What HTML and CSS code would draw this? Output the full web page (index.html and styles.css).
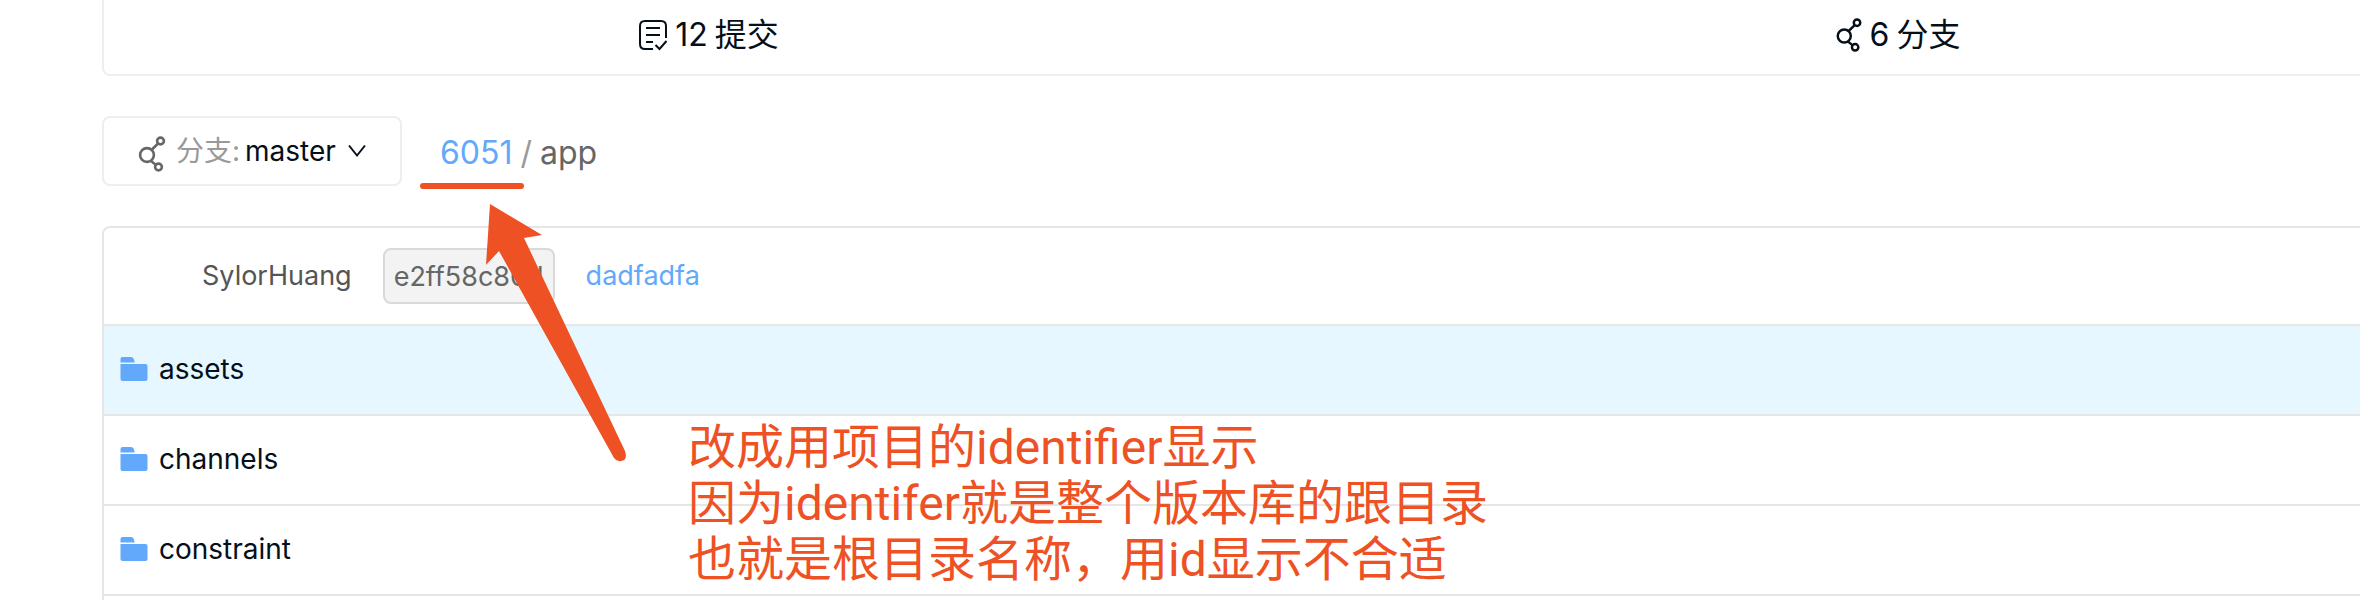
FILE: index.html
```
<!DOCTYPE html>
<html lang="zh-CN">
<head>
    <meta charset="UTF-8">
    <title>app</title>
    <link rel="stylesheet" href="styles.css">
</head>
<body>
    <svg class="symbols">
        <symbol id="icon-branch" viewBox="0 0 28 36">
            <g fill="none" stroke="currentColor" stroke-width="2.6">
                <circle cx="9" cy="19" r="6.9"/>
                <circle cx="22.500" cy="5" r="3.400"/>
                <circle cx="20.500" cy="31" r="3.400"/>
                <path d="M13.500 14L20 7.500M13 25l5 4"/>
            </g>
        </symbol>
        <symbol id="icon-folder" viewBox="0 0 28 26">
            <path fill="currentColor" d="M.5 6.500V3Q.5 1 2.500 1H11q2 0 2.800 2l1 3.500z"/>
            <path fill="currentColor" d="M.5 8h25q2 0 2 2v13q0 2-2 2h-23q-2 0-2-2z"/>
        </symbol>
    </svg>

    <main class="page">
        <ul class="stats">
            <li>
                <svg class="stats-commit" viewBox="0 0 30 32" fill="none" stroke="currentColor" stroke-width="2">
                    <path d="M15 30H7q-5 0-5-5V7q0-5 5-5h16q5 0 5 5v12"/>
                    <path d="M8 9h14M8 16h14M8 23h7M17.500 26l4 4 7-8"/>
                </svg>
                <span>12</span>
                <span>提交</span>
            </li>
            <li>
                <svg class="stats-branch"><use href="#icon-branch"/></svg>
                <span>6</span>
                <span>分支</span>
            </li>
        </ul>

        <div class="toolbar">
            <button class="branch" type="button">
                <svg class="branch-icon"><use href="#icon-branch"/></svg>
                <span class="branch-label">分支:</span>
                <span class="branch-name">master</span>
                <svg class="branch-arrow" viewBox="0 0 18 14" fill="none" stroke="currentColor" stroke-width="2">
                    <path d="M1 1.500l8 10 8-10"/>
                </svg>
            </button>
            <nav class="path">
                <a href="#">6051</a>
                <span class="path-slash">/</span>
                <span>app</span>
            </nav>
        </div>

        <section class="files">
            <div class="commit">
                <span>SylorHuang</span>
                <code class="commit-hash">e2ff58c80d</code>
                <a href="#">dadfadfa</a>
            </div>
            <table class="tree">
                <tr class="active">
                    <td><a href="#"><svg><use href="#icon-folder"/></svg>assets</a></td>
                </tr>
                <tr>
                    <td><a href="#"><svg><use href="#icon-folder"/></svg>channels</a></td>
                </tr>
                <tr>
                    <td><a href="#"><svg><use href="#icon-folder"/></svg>constraint</a></td>
                </tr>
                <tr>
                    <td></td>
                </tr>
            </table>
        </section>
    </main>

    <!-- review notes on top of the page -->
    <svg class="mark" viewBox="0 0 220 290">
        <path d="M13 6h98" stroke="currentColor" stroke-width="6" stroke-linecap="round"/>
        <path fill="currentColor" d="M80 24l52 31-18 3L215 271q3 9-4 10-4 1-7-3L89 71 76 85z"/>
    </svg>
    <p class="note">
        改成用项目的identifier显示<br>
        因为identifer就是整个版本库的跟目录<br>
        也就是根目录名称，用id显示不合适
    </p>
</body>
</html>
```
FILE: styles.css
```
* {
    margin: 0;
    padding: 0;
    box-sizing: border-box;
}

body {
    position: relative;
    height: 100vh;
    overflow: hidden;
    background: #fff;
    color: #050f19;
    font-family: Inter, 'Noto Sans CJK SC', sans-serif;
    font-size: 28px;
    line-height: 40px;
}

a {
    color: #62a9fb;
    text-decoration: none;
}

.symbols {
    display: none;
}

/* content is wider than the window on the right */
.page {
    margin: 0 -144px 0 102px;
}

.stats {
    display: grid;
    grid-template-columns: 1fr 1fr;
    padding: 14px 10px 18px;
    border: 2px solid #eee;
    border-top: none;
    border-radius: 0 0 8px 8px;
    list-style: none;
    font-size: 32px;
}

.stats li {
    display: flex;
    align-items: center;
    justify-content: center;
    gap: 7px;
    height: 42px;
}

.stats-commit {
    width: 30px;
    height: 32px;
}

.stats-branch {
    width: 28px;
    height: 34px;
}

.toolbar {
    display: flex;
    align-items: center;
    gap: 38px;
    margin: 40px 0;
}

.branch {
    display: flex;
    align-items: center;
    width: 300px;
    height: 70px;
    padding: 0 32px 0 34px;
    background: #fff;
    border: 2px solid #eee;
    border-radius: 8px;
    color: #050f19;
    font: inherit;
    white-space: nowrap;
}

.branch-icon {
    flex: none;
    width: 28px;
    height: 36px;
    margin-top: 6px;
    margin-right: 10px;
    color: #666;
}

.branch-label {
    margin-right: 5px;
    color: #999;
}

.branch-arrow {
    flex: none;
    width: 18px;
    height: 14px;
    margin-left: 12px;
}

.path {
    display: flex;
    gap: 8px;
    padding-top: 4px;
    color: #666;
    font-size: 32px;
}

.path-slash {
    color: #999;
}

.files {
    border: 2px solid #e6e6e6;
    border-radius: 8px;
}

.commit {
    display: flex;
    align-items: center;
    gap: 31px;
    height: 96px;
    padding-left: 98px;
    color: #555;
    font-size: 27px;
}

.commit-hash {
    height: 56px;
    padding: 7px 9px;
    background: #f3f3f3;
    border: 2px solid #d9d9d9;
    border-radius: 8px;
    color: #666;
    font-family: inherit;
    font-size: 27px;
}

.tree {
    width: 100%;
    border-collapse: collapse;
}

.tree td {
    height: 90px;
    padding: 0 16px 2px;
    border-top: 2px solid #e6e6e6;
}

.tree .active {
    background: #e6f7ff;
}

.tree a {
    display: flex;
    align-items: center;
    gap: 11px;
    color: #050f19;
}

.tree svg {
    width: 28px;
    height: 26px;
    color: #62a9fb;
}

.mark {
    position: absolute;
    top: 180px;
    left: 410px;
    width: 220px;
    height: 290px;
    color: #ee5124;
}

.note {
    position: absolute;
    top: 420px;
    left: 688px;
    color: #ee5124;
    font-family: Roboto, 'Noto Sans CJK SC', sans-serif;
    font-size: 48px;
    line-height: 56px;
    white-space: nowrap;
}
```
